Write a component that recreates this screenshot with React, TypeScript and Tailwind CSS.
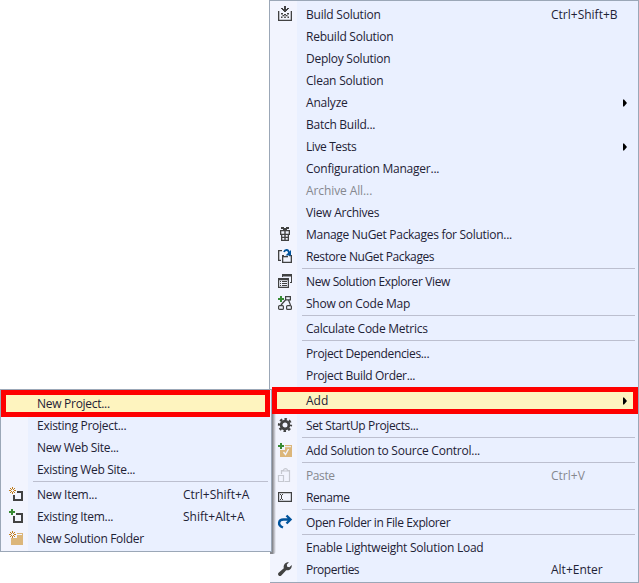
import type { ReactNode } from 'react';

type Item = {
  label?: string;
  keys?: string;
  arrow?: boolean;
  off?: boolean;
  hot?: boolean;
  icon?: ReactNode;
  track?: string;
  sep?: boolean;
};

const ink = '#424242';

const Plus = <path d="M3 1h2v2h2v2H5v2H3V5H1V3h2z" fill="#388a34" />;
const Star = (
  <g fill="#c27d1a">
    <path d="M4 1h1v2H4zM4 6h1v2H4zM1 4h2v1H1zM6 4h2v1H6zM2 2h1v1H2zM6 2h1v1H6zM2 6h1v1H2zM6 6h1v1H6zM3 3h1v1H3zM5 3h1v1H5zM3 5h1v1H3zM5 5h1v1H5z" />
  </g>
);

const Build = (
  <path
    d="M1 5h1.300v8.700h11.400V5H15v10H1zM7 0h2v3h1V2h2v1h-1v1h-1v1H9v1H7V5H6V4H5V3H4V2h2v1h1zM4 7h2v1.500H4zM10 7h2v1.500h-2zM7 8h2v1.500H7zM4 10.500h1.500V12H4zM7.200 10.500h1.600V12H7.200zM10.500 10.500H12V12h-1.500zM5.500 9H7v1.300H5.500zM9 9h1.500v1.300H9z"
    fill={ink}
  />
);
const Gift = (
  <path
    fillRule="evenodd"
    d="M4 1h3v1h2V1h3v2h-2v1h3v5h-1v6H4V9H3V4h3V3H4zM4.300 5.200v2.500h3V5.200zM8.700 5.200v2.500h3V5.200zM5.300 9v1.800h2V9zM8.700 9v1.800h2V9zM5.300 12v1.800h2V12zM8.700 12v1.800h2V12z"
    fill={ink}
  />
);
const Restore = (
  <>
    <path d="M1 2h4v1.300H2.300v8.400H4V13H1zM5 7h2v1.300h-.7v5.400h7.400V8.300H12V7h3v8H5z" fill={ink} />
    <path d="M6 8h5v1.300H6z" fill={ink} />
    <path d="M7 4C8 1.300 11.500 1 12 5" fill="none" stroke="#00539c" strokeWidth="1.800" />
    <path d="M14 2v5.500H8.500z" fill="#00539c" />
  </>
);
const Explorer = (
  <>
    <path fillRule="evenodd" d="M5 1h10v9h-2V9h1V3.500H6V4H5z" fill={ink} />
    <path
      fillRule="evenodd"
      d="M1 5h11v10H1zM2.200 7.200v6.600h8.600V7.200zM3 8h1v1H3zM5 8h5v1H5zM3 10h1v1H3zM5 10h5v1H5zM3 12h1v1H3zM5 12h5v1H5z"
      fill={ink}
    />
  </>
);
const CodeMap = (
  <>
    <path d="M8.600 1.600h4.800v3.200H8.600zM8.500 5L4 10M11.500 5l2 5" fill="none" stroke={ink} strokeWidth="1.200" />
    <rect x="1.600" y="10.600" width="4.800" height="3.800" rx="1" fill="none" stroke={ink} strokeWidth="1.200" />
    <rect x="9.600" y="10.600" width="4.800" height="3.800" rx="1" fill="none" stroke={ink} strokeWidth="1.200" />
    {Plus}
  </>
);
const Gear = (
  <>
    <circle cx="8" cy="8" r="3.900" fill="none" stroke={ink} strokeWidth="2.800" />
    <circle cx="8" cy="8" r="6" fill="none" stroke={ink} strokeWidth="2.200" strokeDasharray="2.500 2.212" strokeDashoffset="1.250" />
  </>
);
const Source = (
  <>
    <path d="M8 3h7v12H3V8h5z" fill="#dcb67a" />
    <path d="M8 4.700h6" stroke="#f2f4fe" />
    <path d="M6.500 10l2 2.500 3-5.500" fill="none" stroke="#f2f4fe" strokeWidth="1.400" />
    {Plus}
  </>
);
const Paste = (
  <path
    d="M7.500 14.500h5v-11h-2C10.500 1 6.500 1 6.500 3.500h-2V7M5 4h8M1.500 8.500h5v6h-5z"
    fill="none"
    stroke="#c6c8d0"
    strokeWidth="1.200"
  />
);
const Rename = (
  <>
    <path d="M1.600 3.600h12.800v8.800H1.600z" fill="none" stroke={ink} strokeWidth="1.200" />
    <path d="M3 5h1v1H3zM5 5h1v1H5zM4 6h1v4H4zM3 10h1v1H3zM5 10h1v1H5z" fill={ink} />
  </>
);
const Open = (
  <path
    d="M6 13.500C0 11 1.500 5.500 6.500 5.500H13M9.500 1.500l4 4-4 4"
    fill="none"
    stroke="#00539c"
    strokeWidth="2.400"
  />
);
const Wrench = (
  <path
    d="M1.600 14.400a1.900 1.900 0 0 1 0-2.700L6.800 7.200C6 3.800 8.500 1 12 1.300L9.800 3.600l.4 2.200 2.200.4L14.700 4c.5 3.400-2.200 5.900-5.500 5.200l-4.900 5.200a1.900 1.900 0 0 1-2.700 0z"
    fill={ink}
  />
);
const NewItem = (
  <>
    <path d="M9 6h5v8H6V9" fill="none" stroke={ink} strokeWidth="2" />
    {Star}
  </>
);
const OldItem = (
  <>
    <path d="M8 6h6v8H6V8" fill="none" stroke={ink} strokeWidth="2" />
    {Plus}
  </>
);
const NewFolder = (
  <>
    <path d="M9 3h6v12H3V8h6z" fill="#dcb67a" />
    <path d="M9 4.500h5" stroke="#f2f4fe" />
    {Star}
  </>
);

const sep: Item = { sep: true };

const mainItems: Item[] = [
  { label: 'Build Solution', keys: 'Ctrl+Shift+B', icon: Build, track: 'tracking-[-0.22px]' },
  { label: 'Rebuild Solution', track: 'tracking-[-0.25px]' },
  { label: 'Deploy Solution', track: 'tracking-[-0.26px]' },
  { label: 'Clean Solution', track: 'tracking-[-0.22px]' },
  { label: 'Analyze', arrow: true, track: 'tracking-[-0.2px]' },
  { label: 'Batch Build...', track: 'tracking-[-0.26px]' },
  { label: 'Live Tests', arrow: true, track: 'tracking-[-0.4px]' },
  { label: 'Configuration Manager...', track: 'tracking-[-0.23px]' },
  { label: 'Archive All...', off: true, track: 'tracking-[-0.1px]' },
  { label: 'View Archives', track: 'tracking-[-0.24px]' },
  { label: 'Manage NuGet Packages for Solution...', icon: Gift, track: 'tracking-[-0.29px]' },
  { label: 'Restore NuGet Packages', icon: Restore, track: 'tracking-[-0.4px]' },
  sep,
  { label: 'New Solution Explorer View', icon: Explorer, track: 'tracking-[-0.38px]' },
  { label: 'Show on Code Map', icon: CodeMap, track: 'tracking-[-0.25px]' },
  sep,
  { label: 'Calculate Code Metrics', track: 'tracking-[-0.26px]' },
  sep,
  { label: 'Project Dependencies...', track: 'tracking-[-0.35px]' },
  { label: 'Project Build Order...', track: 'tracking-[-0.34px]' },
  sep,
  { label: 'Add', arrow: true, hot: true },
  sep,
  { label: 'Set StartUp Projects...', icon: Gear, track: 'tracking-[-0.38px]' },
  sep,
  { label: 'Add Solution to Source Control...', icon: Source, track: 'tracking-[-0.24px]' },
  sep,
  { label: 'Paste', keys: 'Ctrl+V', off: true, icon: Paste, track: 'tracking-[-0.4px]' },
  { label: 'Rename', icon: Rename, track: 'tracking-[-0.4px]' },
  sep,
  { label: 'Open Folder in File Explorer', icon: Open, track: 'tracking-[-0.39px]' },
  sep,
  { label: 'Enable Lightweight Solution Load', track: 'tracking-[-0.25px]' },
  { label: 'Properties', keys: 'Alt+Enter', icon: Wrench, track: 'tracking-[-0.5px]' },
];

const subItems: Item[] = [
  { label: 'New Project...', hot: true, track: 'tracking-[-0.28px]' },
  { label: 'Existing Project...', track: 'tracking-[-0.28px]' },
  { label: 'New Web Site...', track: 'tracking-[-0.33px]' },
  { label: 'Existing Web Site...', track: 'tracking-[-0.31px]' },
  sep,
  { label: 'New Item...', keys: 'Ctrl+Shift+A', icon: NewItem, track: 'tracking-[-0.28px]' },
  { label: 'Existing Item...', keys: 'Shift+Alt+A', icon: OldItem, track: 'tracking-[-0.3px]' },
  { label: 'New Solution Folder', icon: NewFolder, track: 'tracking-[-0.32px]' },
];

function Row({ item, sub }: { item: Item; sub?: boolean }) {
  if (item.sep) {
    return (
      <div className="h-[3px] shrink-0 pl-8 pr-[3px]">
        <div className="h-px bg-[#bcbfcf]" />
      </div>
    );
  }
  return (
    <div className={`relative flex h-[22px] shrink-0 items-center ${item.off ? 'text-[#86888f]' : 'text-[#1e2236]'}`}>
      {item.hot && (
        <div
          className={`absolute -top-[3px] h-[27px] border-[5px] border-[#fe0000] bg-[#fef4bf] ${
            sub ? 'left-0 w-[269px]' : 'left-[2px] w-[366px]'
          }`}
        />
      )}
      <div className="flex w-9 shrink-0 pb-0.5 pl-[7px]">
        {item.icon && (
          <svg width="16" height="16" viewBox="0 0 16 16">
            {item.icon}
          </svg>
        )}
      </div>
      <div className={`relative shrink-0 whitespace-nowrap ${sub ? 'w-[146px]' : 'w-[245px]'}`}>
        <span className={item.track}>{item.label}</span>
      </div>
      {item.keys && <span className="whitespace-nowrap">{item.keys}</span>}
      {item.arrow && (
        <svg className="relative ml-[72px]" width="4" height="8" viewBox="0 0 4 8">
          <path d="M0 .5h1l3 3.500-3 3.500H0z" fill="#000" />
        </svg>
      )}
    </div>
  );
}

export default function App() {
  return (
    <div className="relative flex h-[583px] w-[639px] justify-end overflow-hidden bg-white font-['Open_Sans','Noto_Sans',sans-serif] text-[12px] leading-[22px]">
      <div className="flex h-[583px] w-[370px] flex-col border border-[#9ba7b7] bg-[linear-gradient(to_right,#f2f4fe_27px,#eaf0ff_27px)] pt-[3px]">
        {mainItems.map((item, i) => (
          <Row key={i} item={item} />
        ))}
      </div>
      <div className="absolute left-[269px] top-[552px] h-[31px] w-px bg-white" />
      <div className="absolute left-[270px] top-[414px] h-[140px] w-[6px] rounded-br-[3px] bg-[linear-gradient(to_right,rgba(0,0,0,0.45)_40%,rgba(0,0,0,0))]" />
      <div className="absolute left-0 top-[389px] flex h-[163px] w-[272px] flex-col border border-[#9ba7b7] bg-[linear-gradient(to_right,#f2f4fe_27px,#eaf0ff_27px)] pt-[3px]">
        {subItems.map((item, i) => (
          <Row key={i} item={item} sub />
        ))}
      </div>
    </div>
  );
}
